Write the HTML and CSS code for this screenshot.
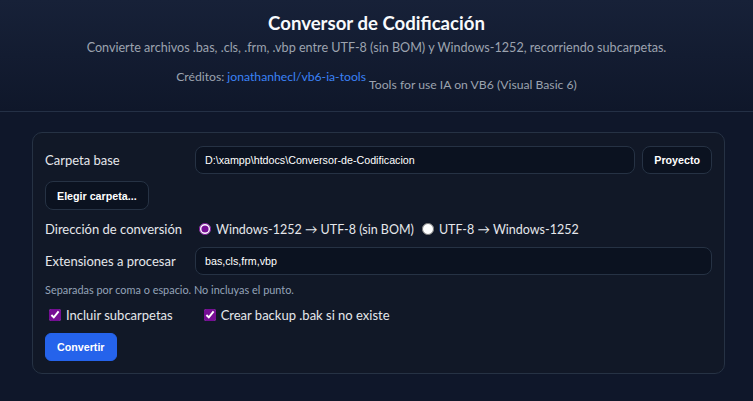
FILE: index.html
```html
<!DOCTYPE html>
<html lang="es">
<head>
<meta charset="utf-8">
<title>Conversor de Codificación</title>
<link rel="stylesheet" href="styles.css">
</head>
<body>
<header class="hero">
  <h1 class="hero-title">Conversor de Codificación</h1>
  <p class="hero-sub">Convierte archivos .bas, .cls, .frm, .vbp entre UTF-8 (sin BOM) y Windows-1252, recorriendo subcarpetas.</p>
  <p class="hero-credits">Créditos: <a class="credit-link" href="#">jonathanhecl/vb6-ia-tools</a> <span class="credit-desc">Tools for use IA on VB6 (Visual Basic 6)</span></p>
</header>
<main class="card">
  <div class="row row-base">
    <label class="field-label" for="base">Carpeta base</label>
    <input class="text-input" id="base" type="text" value="D:\xampp\htdocs\Conversor-de-Codificacion">
    <button class="btn" type="button">Proyecto</button>
  </div>
  <div class="row row-pick">
    <button class="btn btn-pick" type="button">Elegir carpeta...</button>
  </div>
  <div class="row row-dir">
    <span class="field-label">Dirección de conversión</span>
    <label class="opt"><input type="radio" name="dir" checked> Windows-1252 → UTF-8 (sin BOM)</label>
    <label class="opt"><input type="radio" name="dir"> UTF-8 → Windows-1252</label>
  </div>
  <div class="row row-ext">
    <label class="field-label" for="ext">Extensiones a procesar</label>
    <input class="text-input" id="ext" type="text" value="bas,cls,frm,vbp">
  </div>
  <p class="hint">Separadas por coma o espacio. No incluyas el punto.</p>
  <div class="row row-checks">
    <label class="opt"><input type="checkbox" checked> Incluir subcarpetas</label>
    <label class="opt"><input type="checkbox" checked> Crear backup .bak si no existe</label>
  </div>
  <div class="row row-submit">
    <button class="btn btn-primary" type="button">Convertir</button>
  </div>
</main>
</body>
</html>
```
FILE: styles.css
```css
* { box-sizing: border-box; }

html, body {
  margin: 0;
  background: #0f172a;
  color: #e5e7eb;
  font-family: "Segoe UI", Lato, "Noto Sans", sans-serif;
}

.hero {
  text-align: center;
  padding: 11px 16px 17px;
  background: linear-gradient(180deg, #172138 0%, #0f172a 100%);
  border-bottom: 1px solid #243045;
}

.hero-title {
  margin: 0;
  font-size: 18.6px;
  line-height: 24px;
  font-weight: 700;
  color: #f8fafc;
}

.hero-sub {
  margin: 4px 0 0;
  font-size: 12.6px;
  line-height: 18px;
  color: #9ca3af;
}

.hero-credits {
  margin: 11px 0 0;
  font-size: 12.2px;
  line-height: 18px;
  color: #9ca3af;
}

.credit-link {
  color: #3b82f6;
  text-decoration: none;
}

.credit-desc {
  vertical-align: -8px;
}

.card {
  margin: 20px 28px 0 32px;
  padding: 13px 12px 12px;
  background: #111827;
  border: 1px solid #263244;
  border-radius: 10px;
}

.row {
  display: flex;
  align-items: center;
}

.field-label {
  flex: 0 0 150px;
  font-size: 13px;
  color: #e5e7eb;
}

.text-input {
  flex: 1;
  height: 28px;
  min-width: 0;
  padding: 0 9px;
  background: #0b1220;
  border: 1px solid #263244;
  border-radius: 8px;
  color: #ffffff;
  font-family: "Liberation Sans", Arial, sans-serif;
  font-size: 10.7px;
  outline: none;
}

.btn {
  height: 28px;
  padding: 0 11px;
  background: #0b1220;
  border: 1px solid #263244;
  border-radius: 8px;
  color: #ffffff;
  font-family: "Liberation Sans", Arial, sans-serif;
  font-size: 10.7px;
  font-weight: 700;
}

.row-base .btn { margin-left: 7px; }

.row-pick { margin-top: 7px; }
.btn-pick { height: 29px; }

.row-dir { margin-top: 10px; height: 18px; }

.opt {
  display: inline-flex;
  align-items: center;
  font-size: 13px;
  color: #e5e7eb;
  margin-right: 4px;
}

.row-dir .opt { font-size: 12.5px; }

.opt input {
  accent-color: #750d94;
  margin: 0 5px 0 4px;
  width: 12px;
  height: 12px;
}

.row-ext { margin-top: 9px; }

.hint {
  margin: 8px 0 0;
  font-size: 10.9px;
  line-height: 14px;
  color: #94a3b8;
}

.row-checks { margin-top: 9px; height: 18px; }
.row-checks .opt { margin-right: 27px; }

.row-submit { margin-top: 9px; }

.btn-primary {
  background: #2563eb;
  border-color: #2563eb;
  border-radius: 6px;
  padding: 0 11px;
}
```
